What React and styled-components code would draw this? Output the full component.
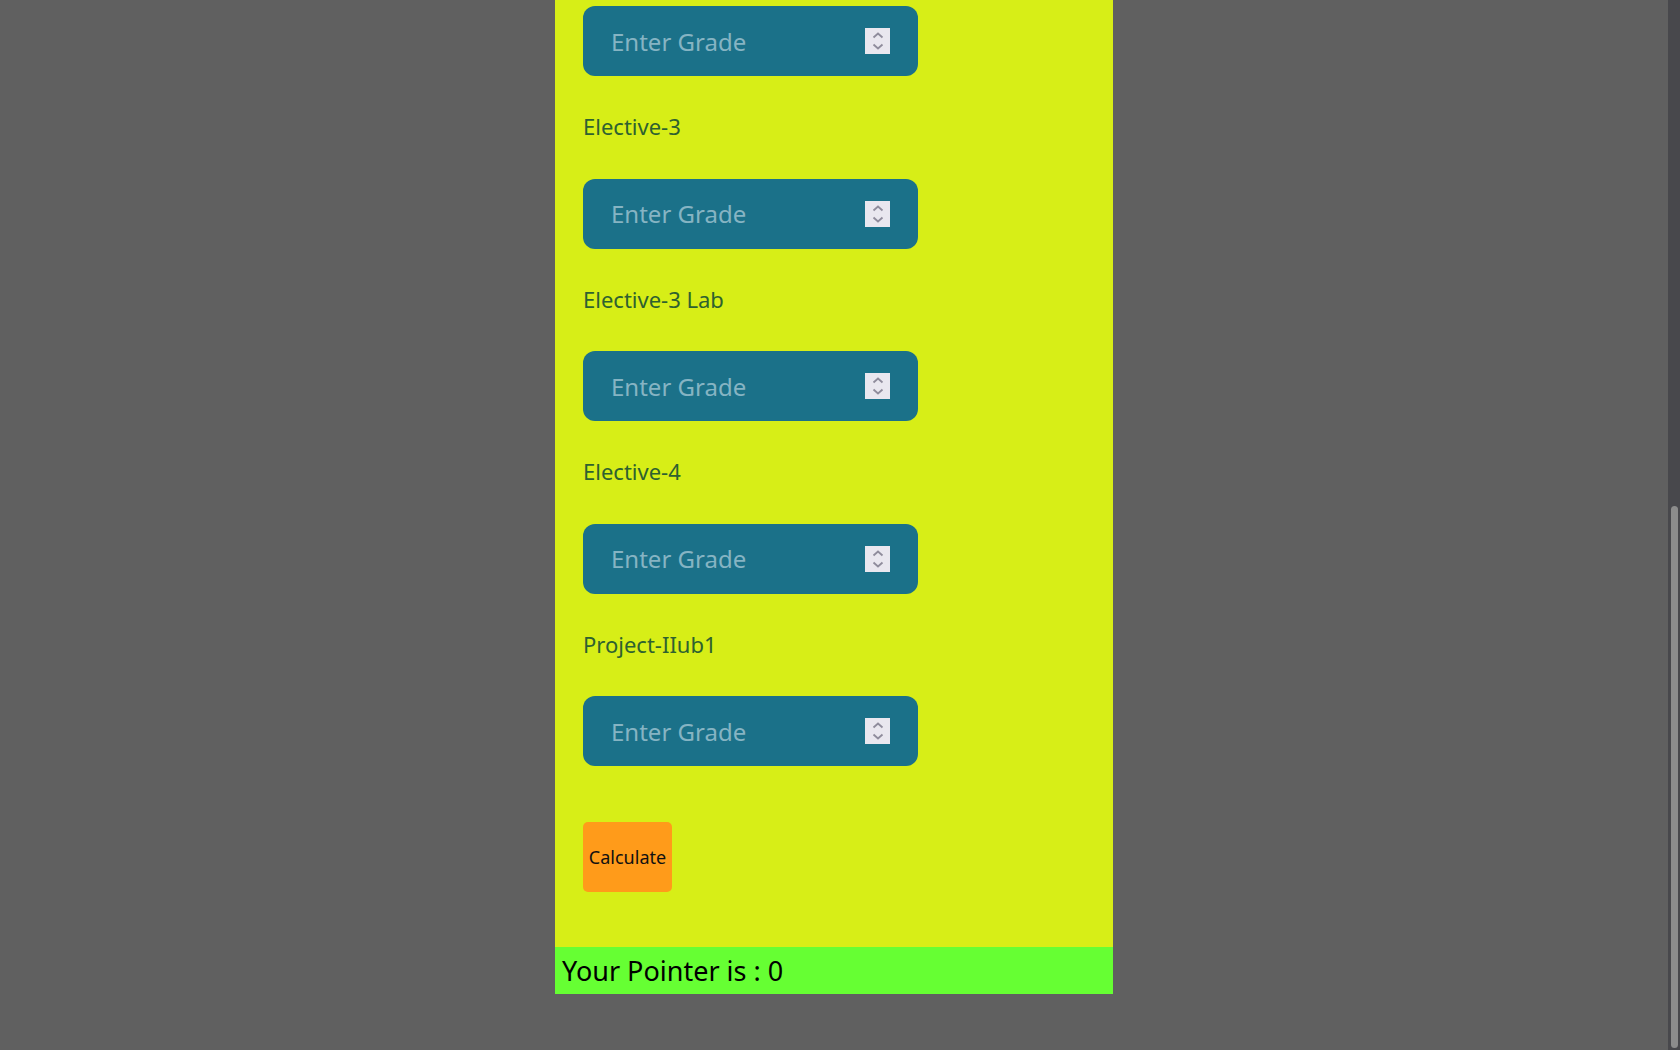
import React from "react";
import styled, { createGlobalStyle } from "styled-components";

const GlobalStyle = createGlobalStyle`
  html, body {
    margin: 0;
    padding: 0;
    height: 100%;
    overflow: hidden;
    background: #606060;
    font-family: "Noto Sans", "Open Sans", sans-serif;
  }
  #root { height: 100%; }
`;

const Screen = styled.div`
  display: flex;
  height: 1050px;
  background: #606060;
`;

const Viewport = styled.main`
  flex: 1;
  display: flex;
  justify-content: center;
  align-items: flex-start;
`;

const Column = styled.div`
  width: 558px;
  display: flex;
  flex-direction: column;
`;

const Panel = styled.form`
  background: #d7ee17;
  padding: 6px 28px 55.5px;
  display: flex;
  flex-direction: column;
  align-items: flex-start;
`;

const Label = styled.label`
  display: block;
  padding: 38px 0 40.5px;
  line-height: 24px;
  font-size: 22px;
  color: #2e6130;
`;

const InputBox = styled.div`
  width: 335px;
  height: 70px;
  box-sizing: border-box;
  background: #1b7189;
  border-radius: 12px;
  display: flex;
  align-items: center;
  padding: 0 28px;
  gap: 10px;
`;

const GradeInput = styled.input`
  flex: 1;
  min-width: 0;
  border: none;
  outline: none;
  background: transparent;
  font-family: inherit;
  font-size: 24px;
  color: #ffffff;
  padding: 0;
  &::placeholder { color: #86b4c3; }
  &::-webkit-outer-spin-button,
  &::-webkit-inner-spin-button { -webkit-appearance: none; margin: 0; }
  -moz-appearance: textfield;
`;

const Spinner = styled.span`
  width: 25px;
  height: 26px;
  background: #e9e7ef;
  display: flex;
  align-items: center;
  justify-content: center;
  flex-shrink: 0;
`;

const CalcButton = styled.button`
  margin-top: 56px;
  width: 89px;
  height: 69.5px;
  border: none;
  border-radius: 5px;
  background: #ff9b1a;
  color: #111;
  font-family: inherit;
  font-size: 18px;
  padding: 0;
  cursor: pointer;
`;

const ResultBar = styled.div`
  background: #66ff33;
  height: 47px;
  display: flex;
  align-items: center;
  padding: 0 7px;
  font-size: 27px;
  color: #000;
`;

const ScrollTrack = styled.div`
  width: 12px;
  background: #48484c;
  display: flex;
  flex-direction: column;
  align-items: center;
  padding: 506px 0 2px;
  box-sizing: border-box;
`;

const ScrollThumb = styled.div`
  width: 7px;
  flex: 1;
  border-radius: 4px;
  background: #8c8c8c;
`;

const SpinIcon = () => (
  <svg width="14" height="22" viewBox="0 0 14 22" fill="none">
    <path d="M2.5 7.5 L7 3.5 L11.5 7.5" stroke="#8f8c9c" strokeWidth="1.8" />
    <path d="M2.5 14.5 L7 18.5 L11.5 14.5" stroke="#8f8c9c" strokeWidth="1.8" />
  </svg>
);

const GradeField = () => (
  <InputBox>
    <GradeInput type="number" placeholder="Enter Grade" />
    <Spinner>
      <SpinIcon />
    </Spinner>
  </InputBox>
);

const subjects = ["Elective-3", "Elective-3 Lab", "Elective-4", "Project-IIub1"];

export default function App() {
  return (
    <>
      <GlobalStyle />
      <Screen>
        <Viewport>
          <Column>
            <Panel onSubmit={(e) => e.preventDefault()}>
              <GradeField />
              {subjects.map((s) => (
                <React.Fragment key={s}>
                  <Label>{s}</Label>
                  <GradeField />
                </React.Fragment>
              ))}
              <CalcButton type="submit">Calculate</CalcButton>
            </Panel>
            <ResultBar>Your Pointer is : 0</ResultBar>
          </Column>
        </Viewport>
        <ScrollTrack>
          <ScrollThumb />
        </ScrollTrack>
      </Screen>
    </>
  );
}
